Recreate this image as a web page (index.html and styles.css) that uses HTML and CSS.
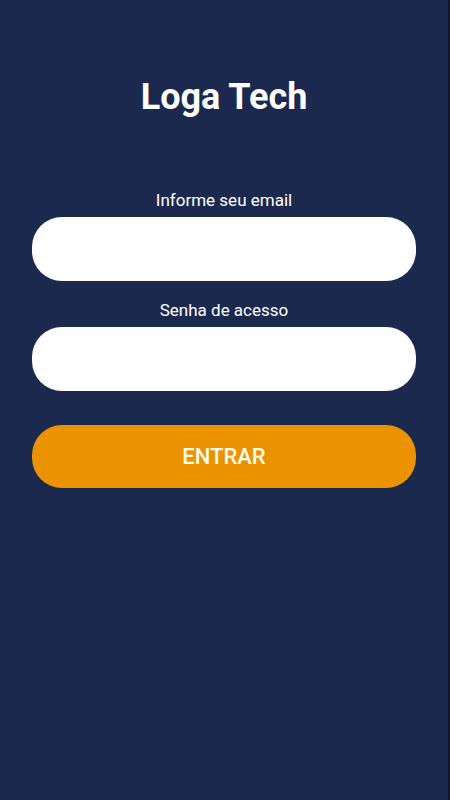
FILE: index.html
```html
<!DOCTYPE html>
<html lang="pt-BR">
<head>
  <meta charset="UTF-8" />
  <meta name="viewport" content="width=device-width, initial-scale=1.0" />
  <title>Loga Tech</title>
  <link rel="stylesheet" href="styles.css">
</head>
<body>
  <div class="screen">
    <h1 class="title">Loga Tech</h1>
    <form class="login">
      <label for="email">Informe seu email</label>
      <input type="email" id="email" />
      <label for="senha">Senha de acesso</label>
      <input type="password" id="senha" />
      <button type="button">ENTRAR</button>
    </form>
  </div>
</body>
</html>
```

FILE: styles.css
```css
html, body {
  margin: 0;
  padding: 0;
  height: 100%;
}
body {
  background-color: #10152a;
  font-family: Roboto, "Noto Sans", sans-serif;
}
.screen {
  width: 448px;
  height: 800px;
  background-color: #1c294e;
  box-sizing: border-box;
  padding: 76px 32px 0;
}
.title {
  margin: 0;
  color: #fff;
  font-size: 36px;
  font-weight: 700;
  text-align: center;
  line-height: 42px;
}
.login {
  display: flex;
  flex-direction: column;
  margin-top: 70px;
}
label {
  display: block;
  color: #fff;
  font-size: 17px;
  text-align: center;
  line-height: 24px;
  margin-bottom: 5px;
}
input {
  height: 64px;
  border: none;
  border-radius: 30px;
  background: #fff;
  margin-bottom: 17px;
  padding: 0 20px;
  font-size: 17px;
  outline: none;
}
button {
  height: 63px;
  margin-top: 17px;
  border: none;
  border-radius: 30px;
  background-color: #ea9200;
  color: #fffbea;
  font-family: Roboto, "Noto Sans", sans-serif;
  font-size: 22px;
  font-weight: 500;
  cursor: pointer;
}
```
